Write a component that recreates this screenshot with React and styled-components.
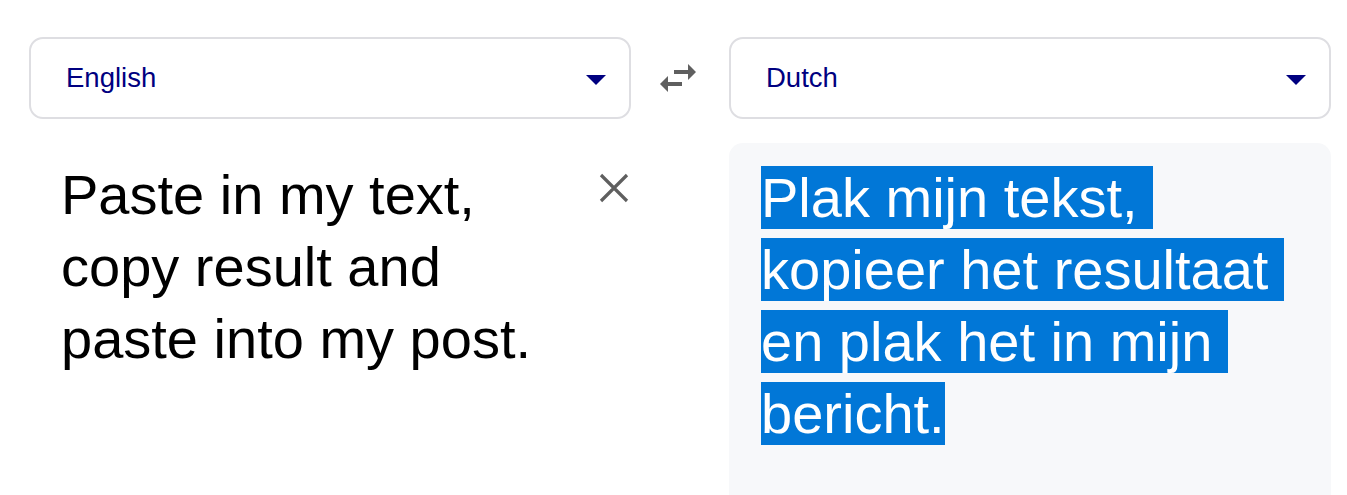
import React from 'react'
import styled, { createGlobalStyle } from 'styled-components'

const GlobalStyle = createGlobalStyle`
  html, body {
    margin: 0;
    padding: 0;
    background: #fff;
    font-family: 'Liberation Sans', Arial, sans-serif;
  }
`

const Page = styled.div`
  display: grid;
  grid-template-columns: 1fr 98px 1fr;
  grid-template-rows: 82px 1fr;
  row-gap: 24px;
  padding: 37px 16px 0 29px;
  height: 495px;
  box-sizing: border-box;
  overflow: hidden;
`

const Select = styled.div`
  display: flex;
  align-items: center;
  justify-content: space-between;
  box-sizing: border-box;
  height: 82px;
  border: 2px solid #dedee2;
  border-radius: 14px;
  padding: 0 23px 0 35px;
  color: #000080;
  font-size: 27.5px;
`

const Caret = styled.span`
  width: 0;
  height: 0;
  margin-top: 3px;
  border-left: 10px solid transparent;
  border-right: 10px solid transparent;
  border-top: 10px solid #000080;
`

const SwapButton = styled.div`
  display: flex;
  align-items: center;
  justify-content: center;
  padding-right: 4px;
  color: #5f5f5f;
`

const InputPane = styled.div`
  display: flex;
  align-items: flex-start;
  padding: 16px 0 0 32px;
`

const SourceText = styled.div`
  width: 500px;
  font-size: 56px;
  line-height: 72px;
  color: #000;
`

const ClearButton = styled.div`
  margin: 11px -1px 0 auto;
  width: 36px;
  height: 36px;
  color: #5f5f5f;
`

const OutputPane = styled.div`
  grid-column: 3;
  background: #f7f8fa;
  border-radius: 14px 14px 0 0;
  padding: 19px 32px 0 32px;
  margin-bottom: -20px;
`

const TargetText = styled.div`
  font-size: 56px;
  line-height: 72px;
  white-space: pre-wrap;
`

const Highlight = styled.span`
  background: #0177d7;
  color: #fff;
`

const SwapIcon = () => (
  <svg width='48' height='48' viewBox='0 0 24 24' fill='currentColor'>
    <path d='M6.99 11L3 15l3.99 4v-3H14v-2H6.99v-3zM21 9l-3.99-4v3H10v2h7.01v3L21 9z' />
  </svg>
)

const CloseIcon = () => (
  <svg width='36' height='36' viewBox='0 0 36 36' fill='none' stroke='currentColor' strokeWidth='3.2'>
    <path d='M5 5L31 31M31 5L5 31' />
  </svg>
)

const App = () => (
  <>
    <GlobalStyle />
    <Page>
      <Select>
        <span>English</span>
        <Caret />
      </Select>
      <SwapButton>
        <SwapIcon />
      </SwapButton>
      <Select>
        <span>Dutch</span>
        <Caret />
      </Select>
      <InputPane>
        <SourceText>Paste in my text, copy result and paste into my post.</SourceText>
        <ClearButton>
          <CloseIcon />
        </ClearButton>
      </InputPane>
      <OutputPane>
        <TargetText>
          <Highlight>Plak mijn tekst, kopieer het resultaat en plak het in mijn bericht.</Highlight>
        </TargetText>
      </OutputPane>
    </Page>
  </>
)

export default App
